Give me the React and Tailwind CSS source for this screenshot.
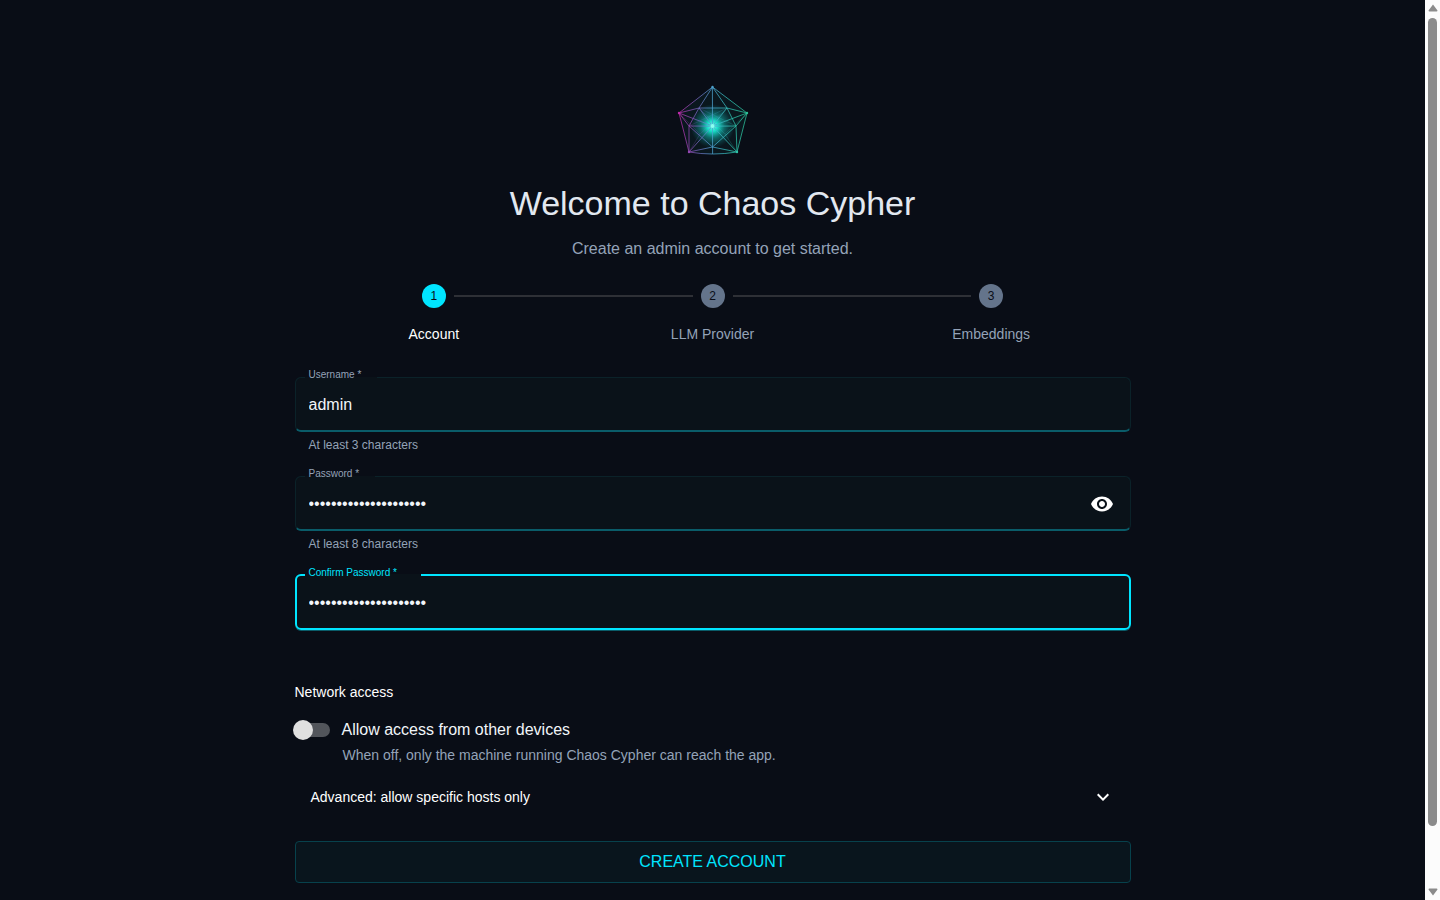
import { useState } from 'react';
import { MdExpandMore, MdVisibility } from 'react-icons/md';

const STEPS = ['Account', 'LLM Provider', 'Embeddings'];

function Logo() {
    return (
        <svg viewBox="1 0 100 90" className="h-[90px] w-[100px]" aria-hidden="true">
            <defs>
                <linearGradient id="edge" gradientUnits="userSpaceOnUse" x1="16" y1="0" x2="86" y2="0">
                    <stop offset="0" stopColor="#c026a8" />
                    <stop offset="0.25" stopColor="#7a5cb8" />
                    <stop offset="0.5" stopColor="#4aa3cf" />
                    <stop offset="0.75" stopColor="#2fc4b4" />
                    <stop offset="1" stopColor="#2bbf94" />
                </linearGradient>
                <radialGradient id="glow">
                    <stop offset="0" stopColor="#7dfff0" />
                    <stop offset="0.25" stopColor="#19e6cf" stopOpacity="0.95" />
                    <stop offset="0.55" stopColor="#12b8b0" stopOpacity="0.5" />
                    <stop offset="1" stopColor="#0e8f95" stopOpacity="0" />
                </radialGradient>
            </defs>
            <path d="M50.5 12 85 38 75 77 50.5 79 27 77 17 38Z" fill="#0f766e" fillOpacity="0.1" />
            <circle cx="50.5" cy="51" r="22" fill="url(#glow)" />
            <g stroke="url(#edge)" fill="none" strokeWidth="0.9" strokeOpacity="0.85">
                <path d="M50.5 12 85 38 75 77Q50.5 81 27 77L17 38Z" />
                <path d="M50.4 12 50.6 79M50.5 12 37 33 27 51 17 38 37 33 65 33 85 38 74 51 65 33Z" />
                <path d="M27 51 50.5 51.2 74 51M27 51 27 77 50.5 72 75 77 74 51M27 51 50.5 72 74 51" />
                <path d="M37 33 50.5 51 65 33M17 38 50.5 51 85 38M27 77 50.5 51 75 77" />
            </g>
            <g stroke="url(#edge)" fill="none" strokeWidth="0.5" strokeOpacity="0.45">
                <path d="M17 38 38 59 27 77M85 38 63 59 75 77M37 33 74 51M65 33 27 51M37 33 63 59M65 33 38 59" />
            </g>
            <circle cx="50.5" cy="51" r="2" fill="#8bfff0" />
            <g fill="url(#edge)">
                <circle cx="50.5" cy="12" r="1.2" />
                <circle cx="17" cy="38" r="1.2" />
                <circle cx="85" cy="38" r="1.2" />
                <circle cx="27" cy="77" r="1.2" />
                <circle cx="75" cy="77" r="1.2" />
            </g>
        </svg>
    );
}

function Stepper({ current }) {
    return (
        <ol className="mt-[23px] grid grid-cols-3">
            {STEPS.map((label, i) => (
                <li key={label} className="flex flex-col items-center gap-4">
                    <div className="flex w-full items-center gap-2">
                        <span className={i > 0 ? 'h-0.5 flex-1 bg-[#2e3036]' : 'h-0.5 flex-1'} />
                        <span
                            className={
                                i === current
                                    ? 'flex size-6 items-center justify-center rounded-full bg-[#00e5ff] text-xs text-[#0a0e17]'
                                    : 'flex size-6 items-center justify-center rounded-full bg-[#64748b] text-xs text-[#0a0e17]'
                            }
                        >
                            {i + 1}
                        </span>
                        <span className={i < STEPS.length - 1 ? 'h-0.5 flex-1 bg-[#2e3036]' : 'h-0.5 flex-1'} />
                    </div>
                    <span className={i === current ? 'text-sm text-white' : 'text-sm text-[#94a3b8]'}>{label}</span>
                </li>
            ))}
        </ol>
    );
}

function Field({ id, label, type = 'text', value, onChange, helper, active, children }) {
    return (
        <div>
            <fieldset
                className={
                    active
                        ? 'rounded-md border-2 border-[#00e5ff] bg-[#0a1219] pl-2 shadow-[0_1px_0_#0a5c69]'
                        : 'rounded-md border border-b-2 border-[#0b2229] border-b-[#0a5c69] bg-[#0a1219] pl-[9px]'
                }
            >
                <legend className={active ? 'pr-6 pb-1 pl-1 text-[10px] leading-3' : 'pr-4 pb-1 pl-1 text-[10px] leading-3'}>
                    <label htmlFor={id} className={active ? 'block text-[#00e5ff]' : 'block text-[#94a3b8]'}>
                        {label} *
                    </label>
                </legend>
                <div className="flex h-[45px] items-start pr-4 pl-1">
                    <input
                        id={id}
                        type={type}
                        value={value}
                        onChange={(e) => onChange(e.target.value)}
                        required
                        className="h-10 min-w-0 flex-1 bg-transparent text-base text-[#f1f5f9] outline-none"
                    />
                    {children}
                </div>
            </fieldset>
            {helper && <p className="mt-[5px] ml-3.5 text-xs leading-4 text-[#94a3b8]">{helper}</p>}
        </div>
    );
}

function Scrollbar() {
    return (
        <div className="flex w-[15px] shrink-0 flex-col items-center justify-between bg-[#fcfcfc] py-1" aria-hidden="true">
            <svg viewBox="0 0 10 8" className="h-2 w-2.5" fill="#8b8b8b">
                <path d="M5 0.5 9.5 6.5Q9.5 7.5 8.5 7.5H1.5Q.5 7.5 .5 6.5Z" />
            </svg>
            <div className="mt-1.5 mb-[62px] w-[9px] flex-1 rounded-full bg-[#8b8b8b]" />
            <svg viewBox="0 0 10 8" className="h-2 w-2.5" fill="#8b8b8b">
                <path d="M5 7.5 9.5 1.5Q9.5 .5 8.5 .5H1.5Q.5 .5 .5 1.5Z" />
            </svg>
        </div>
    );
}

export default function App() {
    const [username, setUsername] = useState('admin');
    const [password, setPassword] = useState('correct-horse-battery');
    const [confirm, setConfirm] = useState('correct-horse-battery');
    const [visible, setVisible] = useState(false);
    const [network, setNetwork] = useState(false);

    return (
        <div className="flex h-screen bg-[#090d16] font-['Liberation_Sans',Arial,sans-serif]">
            <main className="min-w-0 flex-1 overflow-hidden">
                <div className="mx-auto flex max-w-[900px] flex-col px-8 pt-[75px]">
                    <div className="flex flex-col items-center">
                        <Logo />
                        <h1 className="mt-4 text-[34px] leading-[44px] text-[#e2e8f0]">Welcome to Chaos Cypher</h1>
                        <p className="mt-3 text-base text-[#94a3b8]">Create an admin account to get started.</p>
                    </div>

                    <Stepper current={0} />

                    <form className="mt-[25px] flex flex-col" onSubmit={(e) => e.preventDefault()}>
                        <div className="flex flex-col gap-[15px]">
                            <Field id="username" label="Username" value={username} onChange={setUsername} helper="At least 3 characters" />
                            <Field
                                id="password"
                                label="Password"
                                type={visible ? 'text' : 'password'}
                                value={password}
                                onChange={setPassword}
                                helper="At least 8 characters"
                            >
                                <button
                                    type="button"
                                    onClick={() => setVisible(!visible)}
                                    aria-label="Toggle password visibility"
                                    className="mt-2 text-white"
                                >
                                    <MdVisibility size={24} />
                                </button>
                            </Field>
                            <Field
                                id="confirm"
                                label="Confirm Password"
                                type="password"
                                value={confirm}
                                onChange={setConfirm}
                                active
                            />
                        </div>

                        <h2 className="mt-[52px] text-sm text-white">Network access</h2>
                        <div className="mt-4 flex items-center">
                            <input
                                id="network"
                                type="checkbox"
                                role="switch"
                                checked={network}
                                onChange={(e) => setNetwork(e.target.checked)}
                                className="peer sr-only"
                            />
                            <label htmlFor="network" className="group flex items-center gap-3 text-base text-[#f1f5f9]">
                                <span className="-ml-0.5 flex h-5 w-[37px] items-center">
                                    <span
                                        className={
                                            network
                                                ? 'relative z-10 size-5 translate-x-4 rounded-full bg-[#00e5ff]'
                                                : 'relative z-10 size-5 rounded-full bg-[#e0e0e0]'
                                        }
                                    />
                                    <span className="-ml-[18px] h-3.5 flex-1 rounded-full bg-[#52555b]" />
                                </span>
                                Allow access from other devices
                            </label>
                        </div>
                        <p className="mt-[3px] ml-12 text-sm text-[#94a3b8]">
                            When off, only the machine running Chaos Cypher can reach the app.
                        </p>
                        <button type="button" className="mt-5 flex items-center justify-between px-4 text-sm text-white">
                            Advanced: allow specific hosts only
                            <MdExpandMore size={24} />
                        </button>
                        <button
                            type="submit"
                            className="mt-8 h-[42px] rounded-sm border border-[#07414c] bg-[#09151d] text-base text-[#00e5ff]"
                        >
                            CREATE ACCOUNT
                        </button>
                    </form>
                </div>
            </main>
            <Scrollbar />
        </div>
    );
}
